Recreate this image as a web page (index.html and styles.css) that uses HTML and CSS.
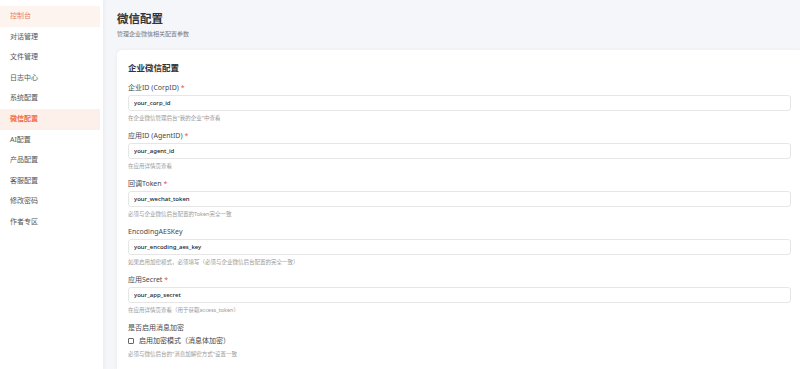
FILE: index.html
```html
<!DOCTYPE html>
<html lang="zh-CN">
<head>
    <meta charset="UTF-8">
    <meta name="viewport" content="width=device-width, initial-scale=1.0">
    <title>微信配置</title>
    <link rel="stylesheet" href="styles.css">
</head>
<body>
    <aside class="sidebar">
        <a class="nav-item hover">控制台</a>
        <a class="nav-item">对话管理</a>
        <a class="nav-item">文件管理</a>
        <a class="nav-item">日志中心</a>
        <a class="nav-item">系统配置</a>
        <a class="nav-item active">微信配置</a>
        <a class="nav-item">AI配置</a>
        <a class="nav-item">产品配置</a>
        <a class="nav-item">客服配置</a>
        <a class="nav-item">修改密码</a>
        <a class="nav-item">作者专区</a>
    </aside>

    <main class="content">
        <h1 class="page-title">微信配置</h1>
        <p class="page-desc">管理企业微信相关配置参数</p>

        <section class="card">
            <h2 class="card-title">企业微信配置</h2>

            <div class="field">
                <label class="label">企业ID (CorpID) <span class="req">*</span></label>
                <input class="input" type="text" value="your_corp_id">
                <p class="help">在企业微信管理后台"我的企业"中查看</p>
            </div>

            <div class="field">
                <label class="label">应用ID (AgentID) <span class="req">*</span></label>
                <input class="input" type="text" value="your_agent_id">
                <p class="help">在应用详情页查看</p>
            </div>

            <div class="field">
                <label class="label">回调Token <span class="req">*</span></label>
                <input class="input" type="text" value="your_wechat_token">
                <p class="help">必须与企业微信后台配置的Token完全一致</p>
            </div>

            <div class="field">
                <label class="label">EncodingAESKey</label>
                <input class="input" type="text" value="your_encoding_aes_key">
                <p class="help">如果启用加密模式，必须填写（必须与企业微信后台配置的完全一致）</p>
            </div>

            <div class="field">
                <label class="label">应用Secret <span class="req">*</span></label>
                <input class="input" type="text" value="your_app_secret">
                <p class="help">在应用详情页查看（用于获取access_token）</p>
            </div>

            <div class="field">
                <label class="label">是否启用消息加密</label>
                <label class="check"><input type="checkbox"> 启用加密模式（消息体加密）</label>
                <p class="help">必须与微信后台的"消息加解密方式"设置一致</p>
            </div>
        </section>
    </main>
</body>
</html>
```

FILE: styles.css
```css
* {
    box-sizing: border-box;
}

body {
    display: flex;
    margin: 0;
    height: 100vh;
    overflow: hidden;
    font-family: "Noto Sans", "Noto Sans CJK SC", sans-serif;
    background: #f5f6fa;
    color: #333;
}

.sidebar {
    width: 103px;
    flex-shrink: 0;
    padding-top: 6px;
    background: #fff;
    box-shadow: 1px 0 4px rgba(0, 0, 0, 0.06);
}

.nav-item {
    display: block;
    padding: 5px 10px;
    font-size: 7px;
    line-height: 10.6px;
    color: #555;
    margin-right: 3px;
}

.nav-item.hover {
    background: #fdf4ef;
    color: #e8825e;
}

.nav-item.active {
    background: #fdf0ea;
    color: #ef6b3f;
    font-weight: 600;
}

.content {
    flex: 1;
    display: flex;
    flex-direction: column;
    padding: 10px 0 0 14px;
}

.page-title {
    margin: 0;
    font-size: 11.5px;
    line-height: 17px;
    font-weight: 700;
    color: #333;
}

.page-desc {
    margin: 3px 0 0;
    font-size: 6px;
    line-height: 9px;
    color: #777;
}

.card {
    flex: 1;
    margin-top: 11px;
    padding: 11px 9px 0 11px;
    background: #fff;
    border-radius: 5px 0 0 0;
    box-shadow: 0 0 4px rgba(0, 0, 0, 0.05);
}

.card-title {
    margin: 0 0 7px;
    font-size: 8.5px;
    line-height: 14px;
    font-weight: 700;
    color: #333;
}

.field {
    margin-bottom: 7px;
}

.label {
    display: block;
    margin-bottom: 1px;
    font-size: 7px;
    line-height: 12px;
    color: #4a4a4a;
}

.req {
    color: #e5533c;
}

.input {
    display: block;
    width: 100%;
    height: 16px;
    margin: 0;
    padding: 0 5px;
    border: 1px solid #e6e6e6;
    border-radius: 3px;
    font-family: "Noto Sans", sans-serif;
    font-size: 6px;
    font-weight: 500;
    color: #222;
    background: #fff;
}

.help {
    margin: 2px 0 0;
    font-size: 5.5px;
    line-height: 10px;
    color: #999;
}

.check {
    display: flex;
    align-items: center;
    gap: 5px;
    font-size: 7px;
    line-height: 12px;
    color: #444;
}

.check input {
    appearance: none;
    width: 6px;
    height: 6px;
    margin: 0;
    border: 1px solid #666;
    border-radius: 1px;
    background: #fff;
}
```
